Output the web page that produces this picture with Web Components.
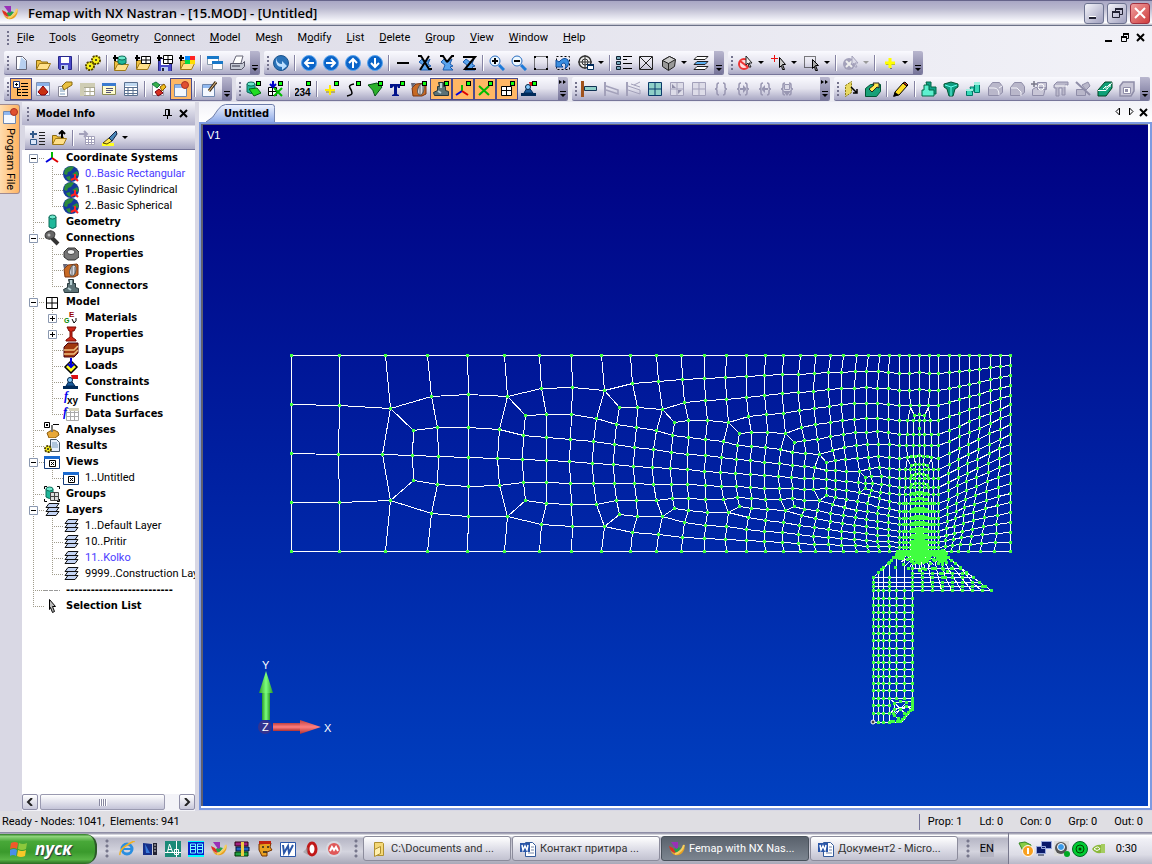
<!DOCTYPE html>
<html lang="en">
<head>
<meta charset="utf-8">
<title>Femap with NX Nastran - [15.MOD] - [Untitled]</title>
<style>
html,body{margin:0;height:100%}
body{font:11px/16px Roboto,"Liberation Sans",sans-serif;color:#000;background:#d9d8e4;overflow:hidden}
</style>
</head>
<body>
<femap-desktop></femap-desktop>
<script>
/* ---------- icon set, 16 x 16 ---------- */
const badge='<path fill="#000" d="M11 0h5v5h-5z"/><path fill="#1f1" d="M12 1h3v3h-3z"/>';
const G='#a3a1ba';
const folder='<path fill="#f0c040" stroke="#8a6a10" d="M1.5 14V5.500h4l1 1.500h6v2"/><path fill="#ffe08a" stroke="#a07a18" d="M1.500 14.500l3-6h11l-3 6z"/>';
const plus='<path stroke="#000" stroke-width="2" d="M2 0v6M0 3h5"/>';
const floppy='<path fill="#4a4ac8" stroke="#26268a" d="M1.500 1.500h13v13h-12l-1-1z"/><path fill="#fff" d="M4 2h8v6H4z"/><path fill="#b8c8f0" d="M4 10h7v5H4z"/><path fill="#223" d="M5 11h2v3H5z"/>';
const gear=(x,y,r)=>`<circle cx="${x}" cy="${y}" r="${r}" fill="#ee0" stroke="#554400" stroke-width="2" stroke-dasharray="2 1"/><circle cx="${x}" cy="${y}" r="${r-1}" fill="#f8f020"/><circle cx="${x}" cy="${y}" r="1" fill="#222"/>`;
const can=(x,y,w,h)=>`<path fill="#20b89a" stroke="#0c6a58" d="M${x} ${y}v${h}q${w/2} 3 ${w} 0v-${h}"/><ellipse cx="${x+w/2}" cy="${y}" rx="${w/2}" ry="2" fill="#6ee8cc" stroke="#0c6a58"/>`;
const ball=p=>`<circle cx="8" cy="8" r="7.500" fill="#0a64c8" stroke="#5aa4ee"/><path d="${p}" fill="none" stroke="#fff" stroke-width="2"/>`;
const star=x=>`<path fill="#5aa4ee" stroke="#1c5cae" d="M5 4l4 3 4-3-2 5 3 2-3 1 3 3H4l2-5-4-3z"/><path stroke="#000" stroke-width="2" fill="none" d="${x}"/>`;
const lens=s=>`<path stroke="#1d7ad8" stroke-width="3" d="M10 10l5 5"/><circle cx="6" cy="6" r="5" fill="#eef8ff" stroke="#2a6ec0"/><path stroke="#000" stroke-width="2" d="${s}"/>`;
const axes=(x,y)=>`<g stroke-width="2" transform="translate(${x} ${y})"><path stroke="#0b0" d="M7 7V1"/><path stroke="#00d" d="M7 7l-6 4"/><path stroke="#d00" d="M7 7l6 4"/></g>`;
const grid='<path fill="#fff" stroke="#000" d="M2.500 3.500h11v11h-11zM8 4v10M3 9h10"/>';
const gridSm='<path fill="#fff" stroke="#000" d="M2.500 5.500h10v9h-10zM7.500 5v10M2 9.500h11"/>';
const globe='<circle cx="8" cy="8" r="8" fill="#143a9c"/><path fill="#2c8a3c" d="M2 3q5-4 9-2l-3 4-3 1-1 3-3-1zM9 8l5-3 2 4-3 1zM3 11l4-1 1 5-3-1z"/><path fill="none" stroke="#f22" stroke-width="2" d="M12 8v4l3 3m-3-3l-4 2"/>';
const coupling='<path fill="#c86a24" stroke="#7a3510" d="M1 7l4-4 9-1 1 1v10l-4 2H2z"/><path fill="#667" d="M0 2h5L1 7z"/><ellipse cx="10" cy="8.500" rx="3" ry="5.500" fill="#d8d8e0" stroke="#555" transform="rotate(15 10 8)"/><path fill="none" stroke="#666" d="M9 4v9M12 5v7"/>';
const connector='<path fill="#5c7276" stroke="#26383c" d="M5.500 1.500h5v4h2v4l3 1v4H1.500l-1-3 4-2v-4h2z"/><path stroke="#b8d0d4" stroke-width="2" d="M8 2v5M5 10l3 2"/>';
const constraint='<path fill="#d11" d="M8 1h7v4H9z"/><path fill="#1a5a9a" stroke="#002a5a" d="M7 5l5 7H3z"/><path fill="#002a5a" d="M0 12h15v3H0z"/><circle cx="7" cy="6" r="2.500" fill="#8cf" stroke="#024"/>';
const layers=c=>`<path fill="${c}" stroke="#111" d="M5 1.500h10l-3 4H2zM5 5.500h10l-3 4H2zM5 9.500h10l-3 4H2z"/>`;
const femap='<path fill="#e8a020" d="M1 9q4 5 9 2 5-3 5-8 2 6-3 10-7 4-11-4z"/><path fill="#28a048" d="M3 9l5-3 4 1-4 5z"/><path fill="#9a30b8" d="M2 1l7 0 0 6-2 1z"/><path fill="#e03020" d="M0 5l4 2 3 5q-6-1-7-7z"/><path fill="none" stroke="#f6d060" stroke-width="2" d="M6 13q7-2 9-9"/>';
const word='<path fill="#fff" stroke="#335a9a" d="M5.500 1.500h7l3 3v11h-10z"/><path stroke="#78a" d="M11 6h3M11 9h3M8 12h6"/><path fill="#2a56a8" d="M0 2h10v9H0z"/><path fill="none" stroke="#fff" stroke-width="1.500" d="M2 4l1 5 2-4 2 4 1-5"/>';
const gbox=p=>`<path fill="#b9b7ca" stroke="#8f8da8" d="M1.500 6.500l4-5h7l3 4v6l-4 3h-10z"/><path fill="none" stroke="#f4f4fa" d="${p}"/>`;
const winIcon='<path fill="#fff" stroke="#123a7a" d="M.5 2.500h15v12H.5z"/><path fill="#1a6ad0" d="M0 2h16v3H0z"/><path fill="none" stroke="#000" d="M5.500 6.500h6v6h-6zM7 8l3 3m0-3l-3 3"/>';
const brace='<path fill="none" stroke="#9997b2" stroke-width="1.500" d="M6 2q-2 0-2 2v2q0 2-2 2 2 0 2 2v2q0 2 2 2M10 2q2 0 2 2v2q0 2 2 2-2 0-2 2v2q0 2-2 2"/>';
const ICON={
new:'<path fill="#fff" stroke="#667" d="M3.500 1.500h6l4 4v9h-10z"/><path fill="#b8d0f0" d="M8 2l5 4v8H6z"/>',
open:folder, save:floppy, gears:gear(11,5,4)+gear(5,11,4),
geoIn:'<g transform="translate(0 1)">'+folder+'</g>'+can(5,3,8,5)+plus,
feIn:folder+'<path fill="#fff" stroke="#000" d="M6.500 1.500h9v7h-9zM11 1v8M6 5h10"/>'+plus,
feOut:'<g transform="translate(0 2)">'+floppy+'</g><path fill="#fff" stroke="#000" d="M6.500.5h9v8h-9zM11 0v9M6 4.500h10"/>'+plus,
resIn:folder+'<path fill="#08f" d="M6 1h5v4H6z"/><path fill="#f22" d="M11 1h5v4h-5z"/><path fill="#0d4" d="M6 5h5v4H6z"/><path fill="#fd0" d="M11 5h5v4h-5z"/>'+plus,
cascade:'<path fill="#fff" stroke="#89a" d="M.5 1.500h11v8H.5z"/><path fill="#1878c8" d="M0 1h12v3H0z"/><path fill="#fff" stroke="#89a" d="M5.500 7.500h10v7h-10z"/><path fill="#1878c8" d="M5 6h11v3H5z"/>',
print:'<path fill="#fff" stroke="#667" d="M4 8l3-7h7l-2 7"/><path fill="#c4c8d4" stroke="#556" d="M1.500 8.500h12l2-2v5l-3 3h-11z"/><path stroke="#334" d="M3 11h8"/>',
sync:'<circle cx="8" cy="8" r="7.500" fill="#2a72b8" stroke="#1c548e"/><path fill="#bfe0ff" d="M3 3q1 6 6 6V6l5 5-5 4v-3Q2 12 3 3z"/>',
left:ball('M13 8H5M8 4L4 8l4 4'),right:ball('M3 8h8M8 4l4 4-4 4'),up:ball('M8 13V5M4 8l4-4 4 4'),down:ball('M8 3v8M4 8l4 4 4-4'),
minus:'<path stroke="#000" stroke-width="2" d="M2 8h12"/>',
vx:star('M1 1h3l8 13h3M12 1l-9 14'),vy:star('M1 1h3l4 6M15 1h-2l-5 6'),vz:star('M2 2h12L4 14h11'),
zin:lens('M6 3v6M3 6h6'),zout:lens('M3 6h6'),
marquee:'<path fill="none" stroke="#000" stroke-dasharray="1 1" d="M1.500 1.500h13v13h-13z"/><path fill="#000" d="M1 1h2v2H1zM13 1h2v2h-2zM1 13h2v2H1zM13 13h2v2h-2z"/>',
undo:'<path fill="none" stroke="#000" stroke-dasharray="2 2" d="M1.500 1.500h13v13h-13z"/><path fill="#3a8ee0" stroke="#0c4a9a" d="M1 5l3 2q5-6 9-2 2 5-3 9 2-5-1-6-2 0-3 2l2 2H1z"/>',
target:'<circle cx="7" cy="7" r="6" fill="#eee" stroke="#333" stroke-width="1.500"/><path stroke="#333" fill="none" d="M7 0v14M0 7h14M4 7a3 3 0 016 0 3 3 0 01-6 0"/><path fill="#fff" stroke="#002a5a" d="M9.500 9.500h6v5h-6z"/><path fill="#002a5a" d="M9 9h7v2H9z"/>',
list:'<path fill="#7ab" stroke="#123" d="M.5 1.500h4v3h-4zM.5 6.500h4v3h-4zM.5 11.500h4v3h-4z"/><path stroke="#000" d="M7 1.500h9M7 4.500h4M7 8.500h9M7 13.500h9"/>',
xbox:'<path fill="none" stroke="#222" d="M1.500 1.500h13v13h-13zM2 2l12 12M14 2L2 14"/>',
cube:'<path fill="#999" stroke="#222" d="M1.500 5.500l7-4 6 3-1 7-6 4-6-4z"/><path fill="#ccc" stroke="#222" d="M1.500 5.500l7-4 6 3-7 4z"/><path stroke="#222" d="M7.500 8v7"/>',
stack:'<path fill="#fff" stroke="#222" d="M4 1.500h11l-3 3H1zM4 11.500h11l-3 3H1z"/><path fill="#5aaef0" stroke="#222" d="M4 6.500h11l-3 3H1z"/>',
nopick:'<circle cx="6" cy="9" r="5" fill="#fdd" stroke="#e33" stroke-width="2"/><path stroke="#e33" stroke-width="2" d="M2 6l8 6"/><path fill="#eee" stroke="#222" d="M8 1l6 7-3 0 2 4-2 0-1-4-2 2z"/>',
pick:'<path stroke="#e11" d="M3.500 0v7M0 3.500h7"/><path fill="#ccc" stroke="#000" d="M8.500 2.500l6 7h-3l2 5-2 0-1-4-2 2z"/>',
boxpick:'<path fill="none" stroke="#000" stroke-dasharray="1 1" d="M.5 1.500h11v11H.5z"/><path fill="#aaa" stroke="#000" d="M8.500 4.500l6 6h-3l2 5-2 0-1-4-2 2z"/>',
nocirc:`<circle cx="6" cy="9" r="6" fill="${G}"/><path stroke="#eee" stroke-width="2" d="M3 6l6 6m0-6l-6 6"/><path fill="#dddce8" stroke="${G}" d="M9 1l6 7-3 0 2 4-2 0-1-4-2 2z"/>`,
yplus:'<path stroke="#777" d="M8 13.500h2M4 9.500h9"/><path stroke="#ff0" stroke-width="3" d="M8 3v10M3 8h10"/>',
infotree:'<path fill="#fff" stroke="#223a7a" d="M.5.5h6v6h-6z"/><path stroke="#000" d="M3.500 2v3M2 3.500h3"/><path fill="none" stroke="#000" d="M8 2.500h7M8 5.500h7M9 8.500h6M9 11.500h6M9 14.500h6M4.500 7v7.500H8M4.500 8.500H8M4.500 11.500H8"/>',
entity:'<path fill="#eaf0fa" stroke="#8090b0" d="M1.500 1.500h13v13h-13z"/><path fill="#8ab0e8" d="M2 2h12v3H2z"/><path fill="#c83010" stroke="#801" d="M8 5l5 6-3 3H6l-3-3z"/>',
handsheet:'<path fill="#fff" stroke="#889" d="M1.500 5.500h9v10h-9z"/><path stroke="#79b" d="M3 8h5M3 10h5M3 13h5"/><path fill="#e8c040" stroke="#8a6a10" d="M5 5l4-4h6v3l-5 3-3 2z"/>',
table:'<path fill="#fff" stroke="#aaa890" d="M1.500 2.500h14v12h-14zM6 2v13M11 2v13M1 6.500h14M1 10.500h14"/><path fill="#cfcdb4" d="M1 2h15v4H1zM1 2h4v13H1z"/>',
note:'<path fill="#fffcd0" stroke="#8a8a50" d="M1.500 3.500h13v10h-13z"/><path fill="#3a7ad0" d="M1 2h14v3H1z"/><path stroke="#557" d="M5 7.500h7M5 9.500h7M5 11.500h5"/>',
sheet:'<path fill="#fff" stroke="#5a7090" d="M1.500 1.500h13v13h-13zM5 6v9M10 6v9M1 6.500h13M1 9.500h13M1 12.500h13"/><path fill="#c0d8f0" d="M2 2h12v3H2z"/>',
debug:'<path fill="#fff" stroke="#99a" d="M1.500 3.500h11v11h-11z"/><path fill="#3ab04a" stroke="#174" d="M1 3l4-2 4 3-3 3z"/><path fill="#f0c020" stroke="#850" d="M9 6l4-3 2 3-4 4z"/><path fill="#d83020" stroke="#701" d="M4 11l4-3 4 4-5 3z"/>',
record:'<path fill="#f4f8ff" stroke="#7088b0" d="M1.500 3.500h12v12h-12z"/><path fill="#90b8f0" d="M2 4h11v3H2z"/><circle cx="12" cy="4" r="3.500" fill="#e05030" stroke="#a32"/>',
edit:'<path fill="#f4f8ff" stroke="#7088b0" d="M1.500 3.500h12v12h-12z"/><path fill="#90b8f0" d="M2 4h11v3H2z"/><path stroke="#432" stroke-width="3" d="M15 1l-7 9"/><path stroke="#e8c080" d="M15 1l-7 9"/>',
solidB:can(2,3,8,8)+'<path fill="#2d2" stroke="#061" d="M4 8l8-1 4 5-7 3z"/>'+badge,
meshB:'<path fill="#fff" stroke="#000" d="M1.500 6.500h8v8h-8zM5.500 6v9M1 10.500h8"/><path stroke="#00c" stroke-width="2" d="M6 0v5M3 3l3 3 3-3"/><path stroke="#0b0" stroke-width="2" d="M7 7l8 8m0-8l-8 8"/>'+badge,
n234:'<text x="-1" y="15" font-family="Liberation Sans" font-size="10" font-weight="700" fill="#000">234</text>'+badge,
ptB:'<path stroke="#980" d="M3 11h9"/><path stroke="#fe0" stroke-width="2" d="M7 4v10M2 9h10"/>'+badge,
curveB:'<path fill="none" stroke="#000" stroke-width="1.500" d="M9 3q-6 1-4 4t2 5-5 3"/>'+badge,
surfB:'<path fill="#2bb02b" stroke="#051" d="M1 4l9-2 5 4-7 9q-1-6-7-11z"/>'+badge,
textB:'<path fill="#00128a" d="M1 3h10v4H9l-1-2v8l2 1v1H3v-1l2-1V5L3 7H1z"/>'+badge,
coupB:coupling+badge,connB:connector+badge,axesB:axes(0,3)+badge,xB:'<path stroke="#0b0" stroke-width="2" d="M2 5l10 9M12 5L2 14"/>'+badge,gridB:gridSm+badge,
consB:constraint+badge,
beam:'<path fill="#a0521c" d="M0 0h3v16H0z"/><path fill="#8fd0c8" stroke="#135" d="M3.500 5.500h12v4h-12z"/>',
beamG:`<path fill="${G}" d="M1 1h2v14H1z"/><path fill="none" stroke="${G}" stroke-width="1.500" d="M3 5l12 4v4L3 9"/>`,
beamG2:`<path fill="${G}" d="M1 1h2v14H1z"/><path fill="none" stroke="${G}" d="M3 5l12 4v4L3 9M6 3l9 3M15 1l-6 3"/>`,
quad:'<path fill="#8fd0c8" stroke="#0a3a6a" d="M1.500 1.500h13v13h-13zM8 1v13M1 8h13"/>',
quadG:`<path fill="#dddce8" stroke="${G}" d="M1.500 1.500h13v13h-13zM8 1v13M1 8h13"/><path fill="#8f8da8" d="M3 3l4 4H3zM9 9h4l-4 4z"/>`,
quadG2:`<path fill="#dddce8" stroke="${G}" d="M1.500 1.500h13v13h-13zM8 1v13M1 8h13"/>`,
brace, braceR:brace+'<path fill="#9997b2" d="M5 7h3V4l4 4-4 4V9H5z"/>',braceL:brace+'<path fill="#9997b2" d="M11 7H8V4L4 8l4 4V9h3z"/>',braceD:brace+'<path fill="#dddce8" stroke="#9997b2" d="M5.500 3.500h5v5h-5z"/><path fill="#9997b2" d="M4 10h8l-4 5z"/>',
hatch:'<path fill="#e8d860" stroke="#8a7a10" stroke-dasharray="2 1" d="M2.500 4.500l6-4v11l-6 4z"/><path fill="none" stroke="#000" stroke-width="1.500" d="M8 6l6 6m0-4v4h-4"/>',
boxarrow:'<path fill="#18a078" stroke="#053" d="M.5 7.500l5-4h10v7l-4 5H.5z"/><path fill="#ffe850" stroke="#222" d="M4 8l5-4-1-2h6v5l-2-1-5 5z"/>',
pencil:'<path fill="#fd2" stroke="#000" d="M2 11l8-9 4 3-8 9-5 1z"/><path fill="#d42" stroke="#000" d="M10 2l2-1 3 3-1 1z"/><path fill="#000" d="M0 16l2-5 4 3z"/>',
extr:'<path fill="#10a088" stroke="#064" d="M5 1h5v5h5v7H8z"/><path fill="#5ef0d0" stroke="#064" d="M3 4h5v5h5v6H1V9h2z"/>',
rev:'<path fill="#0e9c80" stroke="#053" d="M1 3l7-2 7 2v3l-3 2-2 7H6L4 8 1 6z"/><path stroke="#6fe" fill="none" d="M2 4l6 2 6-2M8 6v9"/>',
boxes:'<path fill="#3ad8b8" stroke="#076" d="M1.500 9.500h6v5h-6zM9.500 2.500h5v9h-5zM5 6h4v4H6z"/><path fill="#9ff0e0" d="M1 8h7v2H1zM9 1h6v3H9z"/>',
g1:gbox('M2 7h5q5 0 5 7M12 7l3-2'),g2:gbox('M2 7h6l4 4v4'),g3:'<path stroke="#778" stroke-width="1.500" d="M3 0v6M0 3h6"/><path fill="#c8c6d6" stroke="#8f8da8" d="M6.500 1.500h9v7h-9zM1.500 8.500l3-2h10l-2 8h-11z"/><circle cx="10" cy="6" r="3" fill="none" stroke="#fff"/>',
g4:'<path fill="#b9b7ca" stroke="#8f8da8" d="M1 4l3-3h11v3h-3v10h-3V7H6v8H3V7H1z"/><path stroke="#fff" d="M2 5h12"/>',g5:'<path fill="#b9b7ca" stroke="#8f8da8" d="M1.500 8.500h9v6h-9zM7 4l6-3 2 4-4 4z"/><path stroke="#8f8da8" stroke-width="2" d="M1 1l14 13"/>',
sweep:'<path fill="#10a078" stroke="#042" d="M1 9l7-8h7v6l-6 8H1z"/><path fill="none" stroke="#fff" d="M6 8l3-3v3M10 6l3-3v3M1 9.500h8l6-8"/>',
shell:'<path fill="#c8c6d6" stroke="#8f8da8" stroke-width="1.500" d="M1 5l3-4h11v9l-3 5H1z"/><path fill="#fff" stroke="#8f8da8" d="M4.500 6.500h7v6h-7z"/><path fill="#8f8da8" d="M6 8h3v3H6z"/>',
csys:'<g transform="translate(1 1)">'+axes(0,0)+'</g>',globe,geo:can(5,3,7,10),
bolt:'<path stroke="#333" stroke-width="4" d="M8 8l6 6"/><ellipse cx="6" cy="5" rx="5" ry="4" fill="#666" stroke="#333" transform="rotate(-20 6 5)"/><circle cx="5" cy="5" r="1.500" fill="#bbb"/>',
nut:'<path fill="#777" stroke="#333" d="M1 6l4-4h7l4 4v5l-4 3H5l-4-3z"/><ellipse cx="8" cy="6" rx="4" ry="2.500" fill="#eee" stroke="#444"/>',
region:coupling,connector,model:grid,
mat:'<text x="1" y="13" font-family="Liberation Sans" font-size="7" font-weight="700" fill="#080">G</text><text x="6" y="7" font-family="Liberation Sans" font-size="8" font-weight="700" fill="#900">E</text><path fill="none" stroke="#000" d="M9 9l2 4q3-2 2-5"/>',
ibeam:'<path fill="#d02818" stroke="#7a0c04" d="M4 1h9l-2 4H9v6l4 3v1H3v-1l4-3V5H6z"/>',
layup:'<path fill="#a03810" stroke="#401" d="M1 5l4-4h10v10l-4 4H1z"/><path stroke="#f0c080" stroke-width="1.500" d="M1 8h10l4-4M1 12h10l4-4"/>',
load:'<path fill="#ff2" stroke="#000" stroke-width="1.500" d="M8 3l6 6-6 6-6-6z"/><path stroke="#00d" stroke-width="2" d="M8 0v8M5 6l3 3 3-3"/>',cons:constraint,
fxy:'<text x="1" y="10" font-family="Liberation Serif" font-size="12" font-style="italic" font-weight="700" fill="#00e">f</text><text x="4" y="14" font-family="Liberation Sans" font-size="10" font-weight="700" fill="#000">xy</text>',
ds:'<path fill="#fff" stroke="#aaa" d="M3.500 2.500h12v12h-12zM7.500 2v13M11.500 2v13M3 6.500h12M3 10.500h12"/><path fill="#d5d2bb" d="M6 2h10v3H6z"/><text x="0" y="10" font-family="Liberation Serif" font-size="12" font-style="italic" font-weight="700" fill="#00e">f</text>',
analyses:'<path fill="#fff" stroke="#000" d="M.5.5h5v5h-5zM2 2l2 2m0-2L2 4M9 2.500h6"/><path fill="#e8a838" stroke="#8a5a08" d="M3 11l3-2 4-1 4 2 1 3-4 3H5z"/><path stroke="#777" stroke-width="2" d="M8 3v7"/>',
results:'<path fill="#e8f0fc" stroke="#456" d="M6.500 1.500h6l3 3v9h-9z"/><path stroke="#79b" d="M8 5h5M8 7h6M8 9h6"/>'+gear(4,11,3),
views:winIcon,
groups:can(2,3,7,8)+'<path fill="#ddd" stroke="#444" d="M6.500 6.500h8v8h-8zM10.500 6v9M6 10.500h9"/><path fill="none" stroke="#000" d="M.5 3V.5H3M13 .5h2.500V3M.5 13v2.500H3M13 15.500h2.500V13"/>',
layers:layers('#c4d4f4'),
dash:'<path stroke="#999" stroke-dasharray="4 1" d="M0 8.500h16"/>',
cursor:'<path fill="#bbb" stroke="#000" d="M5.500 1.500l6 7h-3l2 5-2 1-2-5-1 2z"/>',
expand:'<path fill="#dce8fa" stroke="#335a8a" d="M1.500 9.500h6v5h-6z"/><path fill="none" stroke="#335a8a" stroke-width="2" d="M4 1v7M1 4h7"/><path stroke="#222" d="M10 2.500h6M10 5.500h6M10 8.500h6M10 11.500h6M10 14.500h6"/>',
folderup:folder+'<path stroke="#000" stroke-width="2" d="M11 8V2M8 4l3-3 3 3"/>',
gtable:`<path stroke="${G}" stroke-width="2" d="M0 4h8M5 1l3 3-3 3"/><path fill="#fff" stroke="${G}" d="M6.500 6.500h9v8h-9zM9.500 6v9M12.500 6v9M6 9.500h9M6 12.500h9"/>`,
brush:'<path fill="#ff2" d="M0 13h12v3H0z"/><path fill="#ffe850" stroke="#540" d="M1 13l6-5 3 3-5 3z"/><path fill="#4a86b8" stroke="#124" d="M7 8l7-7 1 3-5 7z"/>',
ie:'<circle cx="8" cy="8" r="5" fill="none" stroke="#2a8ee0" stroke-width="3"/><path stroke="#2a8ee0" stroke-width="2" d="M4 8h9"/><path fill="none" stroke="#f0b020" stroke-width="1.500" d="M1 14Q0 9 8 4t7-3"/>',
q2:'<path fill="#16308a" d="M1 2l9 1v11H1z"/><path fill="#3a78d8" d="M3 3l5 9H4z"/><path fill="#223" d="M11 2h4v12h-4z"/><path stroke="#ccc" d="M12 4h2M12 7h2M12 10h2"/>',
q3:'<path fill="#1a8a78" d="M0 0h16v16H0z"/><path fill="none" stroke="#fff" d="M2.500 11l2-8 3 8M3 8.500h4M0 11.500h16M9.500 8.500h4v5h-4zM11.500 0v16"/>',
q4:'<path fill="#02c" d="M0 1h16v14H0z"/><path fill="#0ff" d="M0 0h16v1H0zM0 14h16v2H0z"/><path fill="none" stroke="#7ff" d="M2.500 3v9h5V3zM9.500 3v9h5V3zM3 5.500h4M10 5.500h4M3 8.500h4M10 8.500h4"/>',
femap,
rar:'<path fill="#a02080" stroke="#301" d="M1 1h13v4H1z"/><path fill="#2060c0" stroke="#013" d="M2 6h13v4H2z"/><path fill="#20a040" stroke="#030" d="M1 11h13v4H1z"/><path fill="#ec4" d="M7 1h3v14H7z"/>',
q7:'<path fill="#e8a020" stroke="#730" d="M2 3l12-1-1 4 2 3-5 2v4H5L2 9z"/><path fill="#c02010" d="M2 0h12v3H2z"/><path stroke="#222" stroke-width="1.500" d="M5 6h2M10 6h2M6 11h4"/>',
q8:'<path fill="#fff" stroke="#2a56a8" d="M.5 1.500h15v14H.5z"/><path fill="none" stroke="#2a56a8" stroke-width="2" d="M3 4l1 8 4-7 1 7 4-8"/>',
opera:'<ellipse cx="9" cy="8" rx="4" ry="6" fill="#fff" stroke="#c01818" stroke-width="3"/><path fill="#888" opacity=".5" d="M0 11l5-5v8z"/>',
q10:'<circle cx="8" cy="8" r="8" fill="#d8d8e0"/><circle cx="8" cy="8" r="6" fill="#e05858"/><path fill="none" stroke="#fff" stroke-width="2" d="M4 10l2-4 2 3 2-3 2 4"/>',
folder:'<path fill="#f4d878" stroke="#b09030" d="M3.500 1.500h8l1 1v12h-9z"/><path fill="#fff0b0" stroke="#b09030" d="M3.500 8.500l6-3v7l-6 3z"/>',word,
t1:'<path fill="#8c4" stroke="#382" d="M1 2l6-1 6 3-2 7-5 1z"/><circle cx="10" cy="10" r="5.500" fill="#f8a020" stroke="#fff"/><path stroke="#fff" stroke-width="2" d="M10 7v6"/>',
t2:'<path fill="#0a1a6a" stroke="#9ad" d="M5.500.5h10v7h-10zM.5 5.500h9v7h-9z"/><path stroke="#124" d="M2 14h6"/>',
t3:'<path fill="#ddd" d="M0 0h15v15H0z"/><circle cx="7" cy="7" r="6" fill="#555"/><circle cx="7" cy="6" r="3.500" fill="#3a9ae8" stroke="#fff"/><circle cx="13" cy="13" r="3" fill="#0a2"/>',
t4:'<circle cx="8" cy="8" r="7.500" fill="#0c3" stroke="#062"/><circle cx="8" cy="8" r="4" fill="none" stroke="#040"/><circle cx="8" cy="8" r="1.500" fill="#040"/>',
t5:'<path fill="#8ab83a" d="M2 8q4-5 9-4v8q-6 1-9-4z"/><path fill="none" stroke="#fff" d="M4 8q4-4 6 0-3 3-6 0"/><path fill="#a4cc60" d="M11 3h4v9h-4z"/>'
};
const svg=n=>`<svg width="16" height="16" viewBox="0 0 16 16" fill="none" aria-hidden="true">${ICON[n]||''}</svg>`;
const BOLD='700 11px/16px "DejaVu Sans Condensed","DejaVu Sans",sans-serif';

function define(name,render){
  customElements.define(name,class extends HTMLElement{
    connectedCallback(){ if(!this.shadowRoot){ this.attachShadow({mode:'open'}).innerHTML=render(this); } }
  });
}
const RESET=':host,*{box-sizing:border-box}button{font:inherit;color:inherit;margin:0;padding:0;border:0;background:none}svg{display:block;flex:none}';

/* one toolbar button, optionally pressed or with a drop-down arrow */
define('tool-button',el=>`<style>${RESET}:host{display:block;flex:none}
button{display:flex;align-items:center;justify-content:center;gap:4px;width:22px;height:22px;border:1px solid transparent}
button.drop{width:33px}button.on{background:#ffb764;border-color:#4b4b8b}
i{border:3px solid transparent;border-top-color:#000;border-bottom:0}i.off{border-top-color:#999}</style>
<button type="button" aria-label="${el.getAttribute('icon')}" class="${el.hasAttribute('on')?'on':''} ${el.hasAttribute('drop')?'drop':''}">${svg(el.getAttribute('icon'))}${el.hasAttribute('drop')?`<i class="${el.hasAttribute('off')?'off':''}"></i>`:''}</button>`);

define('tool-sep',()=>`<style>:host{display:flex;flex:none;width:6px;justify-content:center}i{width:2px;height:16px;background:linear-gradient(90deg,#8583a3 50%,#fff 50%)}</style><i></i>`);

define('tool-grip',()=>`<style>:host{display:block;flex:none;width:3px;height:14px;background:repeating-linear-gradient(#73728c 0 2px,transparent 2px 4px) 0 0/2px 100% no-repeat}</style>`);

define('tool-bar',el=>`<style>${RESET}:host{display:flex;flex:none;align-items:center;height:24px;padding-left:3px;background:linear-gradient(#fafaff,#e4e3ee 50%,#a9a8c4);border-bottom:1px solid #77769a;border-radius:2px}
.more{width:10px;height:100%;margin-left:2px;background:linear-gradient(#b9b7cf,#77759a);border-radius:0 2px 2px 0;display:flex;flex-direction:column;align-items:center;justify-content:space-between;padding:3px 0;align-self:stretch}
.more b{display:block;width:6px;border-top:1px solid #000}.more i{display:block;border:3px solid transparent;border-top-color:#000;border-bottom:0;margin-top:2px}
.gap{width:${el.getAttribute('gap')||0}px}</style>
<tool-grip></tool-grip><slot></slot><span class="gap"></span><button class="more" type="button" aria-label="Toolbar options"><svg width="8" height="5">${el.hasAttribute('gap')?'<path d="M0 0l3 2-3 2zM4 0l3 2-3 2z"/>':''}</svg><span><b></b><i></i></span></button>`);

/* suffixes: * pressed, > drop-down, ! greyed arrow; a lone | is a separator */
const tools=s=>s.split(' ').map(t=>{ if(t==='|')return '<tool-sep></tool-sep>';
  const [,n,f]=t.match(/^(\w+)(.*)$/); return `<tool-button icon="${n}"${f.includes('*')?' on':''}${f.includes('>')?' drop':''}${f.includes('!')?' off':''}></tool-button>`; }).join('');

define('title-bar',()=>`<style>${RESET}:host{display:flex;align-items:center;height:26px;flex:none;padding:0 2px;border-top:1px solid #66648a;border-bottom:1px solid #6c7288;background:linear-gradient(#a9a7c4,#bab9cf 30%,#f2f2f8 80%,#fff 90%,#b9bac8)}
h1{flex:1;margin:0 0 0 10px;font:600 13px/20px "Open Sans","Noto Sans",sans-serif;white-space:nowrap}
button{width:20px;height:21px;margin-left:3px;border:1px solid #6d7390;border-radius:3px;background:linear-gradient(135deg,#f4f4fa,#9f9fbd);display:grid;place-items:center}
button.x{background:linear-gradient(135deg,#f0a0a0,#cf3c3c);border-color:#a03040}</style>
${svg('femap')}<h1>Femap with NX Nastran - [15.MOD] - [Untitled]</h1>
<button aria-label="Minimize"><svg width="14" height="14"><path stroke="#223" stroke-width="2" d="M2 12h7"/><path stroke="#fff" d="M2 10.500h7"/></svg></button>
<button aria-label="Restore"><svg width="14" height="14" fill="none" stroke="#223"><path d="M5.500 5V2.500h7v6H10M2.500 6.500h7v5h-7z"/><path stroke-width="2" d="M5 3h8M2 6h8"/></svg></button>
<button class="x" aria-label="Close"><svg width="14" height="14"><path stroke="#fff" stroke-width="2" d="M2 2l10 10M12 2L2 12"/></svg></button>`);

define('menu-bar',()=>`<style>${RESET}:host{display:flex;align-items:center;height:24px;flex:none;padding:0 3px 0 7px;background:linear-gradient(90deg,#dad9e5,#f2f2f8)}
nav{display:flex;flex:1;margin-left:7px;gap:15px}a{color:#000;text-decoration:none}button{width:16px;height:16px;display:grid;place-items:center}</style>
<tool-grip></tool-grip><nav>${['_File','_Tools','G_eometry','_Connect','_Model','Me_sh','M_odify','_List','_Delete','_Group','_View','_Window','_Help'].map(t=>`<a href="#">${t.replace(/_(.)/,'<u>$1</u>')}</a>`).join('')}</nav>
<button aria-label="Minimize view"><svg width="10" height="10"><path stroke="#000" stroke-width="2" d="M1 8h7"/></svg></button>
<button aria-label="Restore view"><svg width="10" height="10" fill="none" stroke="#000"><path d="M3.500 3V1.500h5v4H7M1.500 4.500h5v4h-5z"/><path stroke-width="2" d="M3 1h6M1 4h6"/></svg></button>
<button aria-label="Close view"><svg width="10" height="10"><path stroke="#000" stroke-width="2" d="M1 1l7 7M8 1L1 8"/></svg></button>`);

define('tool-area',()=>`<style>:host{display:flex;flex-direction:column;gap:2px;padding:1px 0 1px 4px;flex:none;overflow:hidden;background:linear-gradient(90deg,#dad9e5,#f2f2f8)}div{display:flex;gap:4px}</style>
<div><tool-bar>${tools('new open save | gears | geoIn feIn feOut resIn | cascade print')}</tool-bar>
<tool-bar>${tools('sync | left right up down | minus vx vy vz | zin zout marquee undo target> | list xbox cube> stack')}</tool-bar>
<tool-bar>${tools('nopick> pick> boxpick> | nocirc>! | yplus>')}</tool-bar></div>
<div><tool-bar>${tools('infotree* entity handsheet table note sheet | debug record* | edit')}</tool-bar>
<tool-bar gap="16">${tools('solidB meshB | n234 | ptB curveB surfB textB coupB connB* axesB* xB* gridB* consB')}</tool-bar>
<tool-bar gap="20">${tools('beam beamG beamG2 quad quadG quadG2 brace braceR braceL braceD')}</tool-bar>
<tool-bar>${tools('hatch boxarrow | pencil | extr rev boxes g1 g2 g3 g4 g5 sweep shell')}</tool-bar></div>`);

/* ---------- model tree: level, icon, text, box (- or +), style (b bold, a active) ---------- */
const TREE=[
[1,'csys','Coordinate Systems','-','b'],[2,'globe','0..Basic Rectangular','','a'],[2,'globe','1..Basic Cylindrical'],[2,'globe','2..Basic Spherical'],
[1,'geo','Geometry','','b'],[1,'bolt','Connections','-','b'],[2,'nut','Properties','','b'],[2,'region','Regions','','b'],[2,'connector','Connectors','','b'],
[1,'model','Model','-','b'],[2,'mat','Materials','+','b'],[2,'ibeam','Properties','+','b'],[2,'layup','Layups','','b'],[2,'load','Loads','','b'],[2,'cons','Constraints','','b'],[2,'fxy','Functions','','b'],[2,'ds','Data Surfaces','','b'],
[1,'analyses','Analyses','','b'],[1,'results','Results','','b'],[1,'views','Views','-','b'],[2,'views','1..Untitled'],[1,'groups','Groups','','b'],
[1,'layers','Layers','-','b'],[2,'layers','1..Default Layer'],[2,'layers','10..Pritir'],[2,'layers','11..Kolko','','a'],[2,'layers','9999..Construction Layer'],
[1,'dash','--------------------------','','b'],[1,'cursor','Selection List','','b']];
const gutter=(w,x,top,bottom,arm,box)=>`<svg width="${w}" height="16" fill="none" stroke="#a09c8c" stroke-dasharray="1 1"><path d="${top?`M${x}.500 0v8`:''}${bottom?`M${x}.500 8v8`:''}${arm?`M${x} 8.500h${w-x}`:''}"/>${box?`<g stroke-dasharray="none"><path fill="#fff" stroke="#8a98b0" d="M${x-4}.500 4.500h8v8h-8z"/><path stroke="#000" d="M${x-2} 8.500h5${box==='+'?`M${x}.500 6v5`:''}"/></g>`:''}</svg>`;
define('model-tree',()=>`<style>${RESET}:host{display:block;background:#fff;overflow:hidden;flex:1;min-height:0}
ul{margin:0;padding:0;list-style:none}li{display:flex;height:16px;white-space:nowrap}
span{margin-left:6px}.b{font:${BOLD}}.a{color:#4a3cff}</style><ul role="tree">${TREE.map((r,i)=>{
  const [lv,ic,tx,box,st='']=r, last=i===TREE.length-1, next=TREE[i+1];
  return `<li role="treeitem">${gutter(22,11,i>0,!last,lv===1,lv===1&&box)}${lv===2?gutter(19,8,true,next&&next[0]===2,true,box):''}${svg(ic)}<span class="${st}">${tx}</span></li>`;}).join('')}</ul>`);

define('scroll-strip',()=>`<style>${RESET}:host{display:flex;height:17px;flex:none;gap:2px;background:#f3f3f8}
button{width:16px;height:16px;border:1px solid #8f8fa8;border-radius:2px;background:linear-gradient(#fff,#c8c8da);display:grid;place-items:center}
.thumb{flex:1;margin-right:12px;border:1px solid #9a9ab0;border-radius:2px;background:linear-gradient(#fff,#c4c4d8);height:16px;display:grid;place-items:center}
.thumb i{width:8px;height:7px;background:repeating-linear-gradient(90deg,#8888a0 0 1px,#fff 1px 2px)}</style>
<button aria-label="Scroll left"><svg width="8" height="8" fill="none" stroke="#222" stroke-width="2"><path d="M6 0L2 4l4 4"/></svg></button><div class="thumb"><i></i></div><button aria-label="Scroll right"><svg width="8" height="8" fill="none" stroke="#222" stroke-width="2"><path d="M2 0l4 4-4 4"/></svg></button>`);

define('model-info',()=>`<style>${RESET}:host{display:flex;flex-direction:column;width:173px;flex:none;min-height:0}
header{display:flex;align-items:center;height:23px;padding:0 4px 0 5px;background:linear-gradient(#f2f2f8,#b4b3cc)}
h2{flex:1;margin:0 0 0 6px;font:${BOLD}}header button{width:16px;height:16px;display:grid;place-items:center}
.tools{display:flex;align-items:center;height:24px;margin:1px 0 0 3px;padding-left:1px;background:linear-gradient(#fafaff,#dddce8 50%,#a9a8c4);border-bottom:1px solid #77769a}</style>
<header><tool-grip></tool-grip><h2>Model Info</h2><button aria-label="Pin"><svg width="9" height="10" fill="none" stroke="#000"><path d="M2.500 6V.5h4V6M0 6.500h9M4.500 7v3M5.500 1v5"/></svg></button><button aria-label="Close"><svg width="9" height="9"><path stroke="#000" stroke-width="2" d="M1 1l7 7M8 1L1 8"/></svg></button></header>
<div class="tools"><tool-button icon="expand"></tool-button><tool-button icon="folderup"></tool-button><tool-sep></tool-sep><tool-button icon="gtable"></tool-button><tool-button icon="brush" drop></tool-button></div>
<model-tree></model-tree><scroll-strip></scroll-strip>`);

define('side-tab',()=>`<style>${RESET}:host{display:block;width:22px;flex:none;padding-top:2px;background:#d9d8e4}
button{display:flex;flex-direction:column;align-items:center;gap:4px;width:20px;height:90px;padding-top:3px;background:linear-gradient(90deg,#ffdcae,#ffb462);border:1px solid #a08a90;border-left:0;border-radius:0 3px 3px 0}
span{writing-mode:vertical-rl;white-space:nowrap;line-height:14px}</style><button type="button">${svg('record')}<span>Program File</span></button>`);

/* ---------- finite element mesh ---------- */
/* Node columns are stored in thirds of a pixel: "x,y x,y ..." from the top edge down. */
const col=(dx,s)=>s.split(' ').map(p=>{const [x,y]=p.split(',').map(Number);return [x+dx,y];});
/* a transition column splits at node a: inner is the finer chain spliced between a and its mirror */
function buildPlate(){
  const lines=[],nodes=[];
  const poly=p=>{lines.push(p);};
  const link=(A,B)=>A.forEach((p,i)=>B[i]&&lines.push([p,B[i]]));
  const R=1080;
  const seq=[
  [col(0,'34,46 34,193 34,340 34,487 34,634')],
  [col(0,'178,46 178,196 175,343 178,487 178,634')],
  [col(0,'316,46 331,205 307,343 331,481 316,634'),1,col(0,'400,271 397,346 400,421')],
  [col(0,'442,46 454,169 472,262 475,349 472,433 454,520 442,634')],
  [col(0,'562,46 565,163 565,262 565,352 565,439 565,529 562,634')],
  [col(0,'673,46 682,169 658,268 652,355 658,436 682,528 673,634'),1,col(0,'736,226 730,286 727,358 730,427 736,481')],
  [col(0,'778,46 784,145 799,223 799,292 799,361 799,427 799,490 784,553 778,634')],
  [col(0,'874,46 877,142 874,223 871,298 868,364 871,430 874,493 877,559 874,634')],
  [col(0,'964,46 973,151 949,235 940,304 937,370 940,430 949,493 973,559 964,634'),1,col(0,'1018,202 1009,253 1003,313 1000,373 1003,430 1009,481 1018,523')],
  [col(0,'1051,46 1057,130 1072,202 1069,262 1063,322 1060,379 1063,430 1069,481 1072,529 1057,577 1051,634')],
  [col(R,'49,46 55,124 67,208 49,271 40,328 37,382 40,433 49,481 67,529 55,583 49,634'),2,col(R,'103,247 97,286 94,337 91,385 94,433 97,475 103,505')],
  [col(R,'124,46 127,118 133,187 145,241 145,292 142,343 142,388 142,433 145,475 145,511 133,547 127,590 124,634')],
  [col(R,'193,46 193,115 196,181 202,241 196,298 196,346 193,394 196,436 196,478 202,517 196,556 193,595 193,634')],
  [col(R,'259,46 256,112 259,178 265,247 250,304 244,352 241,397 244,439 250,478 265,517 259,559 256,598 259,634'),3,col(R,'298,280 292,316 289,358 286,400 289,439 292,472 298,499')],
  [col(R,'319,46 319,109 319,172 325,229 334,277 334,319 331,361 331,403 331,442 334,475 334,505 325,532 319,568 319,601 319,634')],
  [col(R,'376,46 373,106 373,166 379,223 382,277 376,322 373,367 373,406 373,445 376,478 382,508 376,541 373,574 373,604 376,634')],
  [col(R,'430,46 427,103 427,160 430,220 436,280 421,328 418,370 415,409 418,445 421,478 436,511 430,547 427,577 427,607 430,634'),4,col(R,'463,307 457,337 457,376 454,412 457,445 457,475 463,499')],
  [col(R,'481,46 475,103 475,157 478,211 484,262 493,301 496,340 493,379 493,415 493,448 493,481 493,508 484,526 478,556 475,583 475,610 481,634')],
  [col(R,'526,46 523,100 520,154 523,205 526,253 532,298 538,343 523,382 520,415 520,448 538,481 532,511 526,535 523,562 520,589 523,613 526,634'),6,col(R,'559,367 559,391 559,418 559,445 559,466')],
  [col(R,'571,46 565,97 565,148 568,199 571,247 571,289 577,331 586,361 586,391 586,421 586,448 586,472 577,493 571,520 571,544 565,568 565,592 565,613 571,634')],
  [col(R,'610,46 604,97 604,145 604,193 607,241 610,283 613,322 616,358 619,394 619,424 619,451 619,478 613,502 610,526 607,550 604,574 604,595 604,616 610,634')],
  [col(R,'649,46 646,94 643,145 643,190 643,238 646,277 649,316 652,355 658,394 655,427 658,457 652,484 649,511 646,532 643,556 643,577 643,598 646,616 649,634'),8,col(R,'676,412 676,430 676,445')],
  [col(R,'685,46 679,94 679,142 679,190 679,235 679,277 682,313 685,352 688,385 694,409 697,430 694,451 688,466 682,490 682,514 679,538 679,559 679,580 679,601 682,619 685,634')],
  [col(R,'718,46 715,94 712,145 712,190 712,235 712,274 715,313 715,349 718,382 724,409 724,433 721,457 718,475 715,500 712,520 712,544 712,565 712,586 712,604 715,619 718,634')],
  [col(R,'748,46 745,97 745,145 745,193 745,238 745,277 748,313 748,352 748,385 748,412 748,436 748,460 748,484 748,505 745,526 745,547 745,568 745,586 745,604 748,619 748,634')]];
  let prev=null;
  for(const [c,a,inner] of seq){
    poly(c); nodes.push(...c); if(prev) link(prev,c); prev=c;
    if(inner){ const n=c.length; poly([c[a],...inner,c[n-1-a]]); nodes.push(...inner);
      for(let k=a+1;k<=n-2-a;k++) lines.push([c[k],inner[k-a]]);
      prev=[...c.slice(0,a+1),...inner,...c.slice(n-1-a)]; }
  }
  /* refined band above the contact */
  const ly=[46,100,151,196,241,283,316,355,388,415,442,463,490,514,535,553,574,592,605,620,634];
  const L=ly.map(y=>[R+778,y]), E=ly.map(y=>[R+895,y]);
  poly(L);poly(E);nodes.push(...L,...E);link(prev,L);
  const few=[[808,838,868],[808,838,868],[808,838,868],[811,838,865],[802,820,838,853,871],[802,820,838,853,874],[799,820,838,853,874],[802,814,826,838,850,862,874]];
  const mid=[796,811,823,838,853,865,880], low=[790,799,811,820,829,838,847,856,865,874,883];
  ly.forEach((y,i)=>{ const xs=i<8?few[i]:i<12?mid:low;
    const bend=i&&i<3?-3:(i===7?-10:0);
    const row=[L[i],...xs.map(x=>[R+x,y+Math.round(bend*(1-Math.abs(x-838)/60))]),E[i]]; poly(row);nodes.push(...row); });
  poly(col(R,'808,46 808,148 811,202 802,244 799,316 802,355 796,391 790,634'));
  poly(col(R,'868,46 868,148 865,202 871,244 874,316 874,355 880,391 883,634'));
  poly(col(R,'811,202 823,226 853,226 865,202'));nodes.push(...col(R,'823,226 838,223 853,226 838,265'));
  poly(col(R,'823,226 820,250 820,346 826,370 826,634'));poly(col(R,'853,226 853,346 850,370 850,634'));poly(col(R,'838,46 838,634'));
  poly(col(R,'802,355 811,376 811,634'));poly(col(R,'874,355 865,376 865,634'));
  for(const x of [799,874]) poly([[R+x,470],[R+x,634]]);
  for(const y of [372,400,428,457,475,503,527,545,565,583,600,612,626]){
    const xs=y<440?[814,826,838,850,862]:[817,826,832,838,844,850,859];
    const row=xs.map(x=>[R+x,y+Math.round(Math.pow((x-838)/27,2)*5)]);
    poly(row); nodes.push(...row); }
  /* right-hand fan of rows falling toward the contact */
  const tx=[895,928,958,988,1018,1051,1081,1111], bx=[895,913,934,955,985,1021,1063,1111];
  const fan=tx.map((x,j)=>ly.map((y,i)=>{ const t=i/20, ry=46+29.4*i, s=(x-895)/216;
    return [R+Math.round(x+(bx[j]-x)*Math.pow(t,2.2)),Math.round(y+(ry-y)*s)]; }));
  fan.forEach((c,j)=>{poly(c);nodes.push(...c); if(j) link(fan[j-1],c);});
  return {lines,nodes};
}
/* shaft and wedge under the plate, same thirds of a pixel */
function buildShaft(){
  const lines=[],nodes=[]; const O=([x,y])=>[x+1680,y+480];
  const P=s=>col(0,s).map(O);
  const xs=[100,115,130,148,169,193,217], ys=[232,247,259,271,295,316,337,358,379,400,421,445,466,487,508,529,550,571,595];
  for(const y of ys){ const r=xs.map(x=>O([x,y])); lines.push(r);nodes.push(...r.filter((_,i)=>y>265||i%3===0)); }
  for(const y of [616,640,665]){ const r=xs.slice(0,4).map(x=>O([x,y])); lines.push(r);nodes.push(...r); }
  const top=[232,217,202,187,172,163,157];
  xs.forEach((x,i)=>{ lines.push([O([x,top[i]]),O([x,i<4?665:595])]); nodes.push(O([x,top[i]])); });
  lines.push(P('100,232 115,217 130,202 144,190 160,172 178,155'));nodes.push(...P('115,217 124,208 130,202 144,190 153,181 160,172 169,163 178,157'));
  const edge=P('322,172 334,181 346,190 361,202 379,217 400,232 418,247 436,259 454,271');
  lines.push(O([298,155])?[O([298,155]),...edge]:edge);nodes.push(...edge);
  for(const [y,e] of [[205,361],[218,379],[232,400],[247,418],[259,436],[271,454]]){
    const r=[]; for(let x=217;x<e-8;x+=30) r.push(O([x,y])); r.push(O([e,y])); lines.push(r);nodes.push(...r); }
  for(const s of ['247,271 244,205 240,160','277,271 268,220 258,160','304,271 292,220 280,160','334,271 316,232 300,180','364,271 340,232 316,190','394,271 364,232 334,196','424,271 400,250 361,202']) lines.push(P(s));
  lines.push(P('217,595 217,627 208,637 184,665 148,665'),P('148,595 169,612 181,628 199,643'),P('217,604 181,604 163,610 163,646 181,664'),P('217,616 181,628 160,640'),P('199,607 163,646'),P('148,640 163,628 199,619 217,627'),P('163,610 199,643'));
  nodes.push(...P('163,610 181,604 199,607 217,604 163,628 181,628 199,619 217,612 217,620 217,627 211,631 205,637 199,643 193,652 187,658 181,664 172,664 160,664 154,664 160,640 163,646 175,655 193,640'));
  /* dense contact nodes in arcs around the hot spots */
  for(const [cx,cy,max,n] of [[238,154,40,10],[303,172,24,9],[181,168,14,6]])
    for(let r=0;r<max;r+=7) for(let k=0;k<=n;k++){ const a=Math.PI*k/n*(cx===238?1:2); nodes.push(O([Math.round(cx+r*Math.cos(a)),Math.round(cy+r*Math.sin(a))])); }
  nodes.push(...P('166,202 190,193 205,205 220,190 238,211 256,208 271,190 286,205 300,220 310,208 322,214 334,205 316,232 200,178 214,184 262,181 280,178'));
  for(let x=170;x<310;x+=9) nodes.push(O([x,154]),O([x,162]));
  for(let a=0;a<=12;a++){ const c=Math.cos(Math.PI*a/12),s=Math.sin(Math.PI*a/12); lines.push([O([238,155]),O([Math.round(238+62*c),Math.round(157+52*s)])]); }
  return {lines,nodes};
}
define('mesh-view',()=>{
  const a=buildPlate(),b=buildShaft();
  /* data origin lies 77,215 inside the viewport */
  const X=v=>Math.round(v/3)+77, Y=v=>Math.round(v/3)+215;
  let d='',q='';
  for(const l of [...a.lines,...b.lines]) d+='M'+l.map(([x,y])=>`${X(x)}.500 ${Y(y)}.500`).join('L');
  const seen=new Set();
  for(const [x,y] of [...a.nodes,...b.nodes]){ const k=X(x)+','+Y(y); if(seen.has(k))continue; seen.add(k); q+=`M${X(x)-1} ${Y(y)-1}h3v3h-3z`; }
  return `<style>:host{display:block;flex:1;min-height:0;overflow:hidden;background:linear-gradient(#000082,#0040c0)}
svg{display:block;width:100%;height:100%}text{font:11px "Liberation Sans",sans-serif;fill:#fff}</style>
<svg role="img" aria-label="Finite element mesh"><defs><linearGradient id="gr"><stop stop-color="#2a9a2a"/><stop offset=".5" stop-color="#7dff7d"/><stop offset="1" stop-color="#2a9a2a"/></linearGradient>
<linearGradient id="rd" x2="0" y2="1"><stop stop-color="#c04040"/><stop offset=".5" stop-color="#ff8080"/><stop offset="1" stop-color="#b03030"/></linearGradient></defs>
<g shape-rendering="crispEdges"><path d="${d}" fill="none" stroke="#fff"/><path d="${q}" fill="#40ff40"/></g>
<circle cx="670" cy="597" r="2" fill="#444" stroke="#fff"/>
<path fill="url(#gr)" d="M59 567h8v28h-8z"/><path fill="url(#gr)" d="M63 546l7 22H56z"/>
<path fill="url(#rd)" d="M70 598h27v8H70z"/><path fill="url(#rd)" d="M97 595l21 7-21 7z"/>
<circle cx="62" cy="602" r="7" fill="#333390"/>
<text x="4" y="14">V1</text><text x="59" y="544">Y</text><text x="121" y="607">X</text><text x="59" y="606">Z</text></svg>`;
});

define('view-pane',()=>`<style>${RESET}:host{display:flex;flex-direction:column;flex:1;min-width:0;margin:0 0 1px 4px}
.tabs{display:flex;align-items:flex-end;flex:none;height:20px;padding:0 2px 0 7px;background:linear-gradient(#f2f2f8,#fff)}
.tab{position:relative;z-index:0;height:18px;padding:0 6px 0 18px;font:${BOLD};line-height:20px}
.tab svg{position:absolute;inset:0;z-index:-1}
.nav{margin-left:auto;display:flex;align-self:center}.nav button{width:13px;height:14px;display:grid;place-items:center}
.frame{flex:1;min-height:0;display:flex;border:2px solid #7e9be0;background:#fff;padding:0 2px 2px 0}
.inner{flex:1;display:flex;min-width:0;border:solid #606070;border-width:1px 0 0 2px}</style>
<div class="tabs"><button class="tab" type="button"><svg width="100%" height="18" viewBox="0 0 71 18" preserveAspectRatio="none"><defs><linearGradient id="t" x2="0" y2="1"><stop stop-color="#f0f4ff"/><stop offset="1" stop-color="#8fabe8"/></linearGradient></defs><path fill="url(#t)" stroke="#6a7aa8" d="M0 18Q8 14 12 6 16 .5 20 .5h48q2.500 0 2.500 3V18"/></svg>Untitled</button>
<div class="nav"><button aria-label="Previous tab"><svg width="8" height="10" fill="none" stroke="#000"><path d="M5.500 1v7L2 4.500z"/></svg></button><button aria-label="Next tab"><svg width="8" height="10" fill="none" stroke="#000"><path d="M2.500 1v7L6 4.500z"/></svg></button><button aria-label="Close tab"><svg width="9" height="9"><path stroke="#000" stroke-width="2" d="M1 1l7 7M8 1L1 8"/></svg></button></div></div>
<div class="frame"><div class="inner"><mesh-view></mesh-view></div></div>`);

define('status-bar',()=>`<style>:host{display:flex;align-items:center;gap:17px;height:22px;flex:none;padding:1px 9px 0 2px;background:#dfdee3;border-bottom:1px solid #8e8da6;box-sizing:border-box;white-space:nowrap;font-size:11px}
.msg{flex:1;white-space:pre}.first{border-left:1px solid #77769a;padding-left:8px}</style>
<span class="msg">Ready - Nodes: 1041,  Elements: 941</span><span class="first">Prop: 1</span><span>Ld: 0</span><span>Con: 0</span><span>Grp: 0</span><span>Out: 0</span>`);

define('task-button',el=>`<style>${RESET}:host{display:block;flex:1 1 0;min-width:0;max-width:148px}
button{display:flex;align-items:center;gap:4px;width:100%;height:25px;padding:0 7px;border:1px solid #8c8c9c;border-radius:3px;background:linear-gradient(#fff,#d9d9e4 60%,#c2c2d0);color:#333;white-space:nowrap}
button.on{background:linear-gradient(#59616c,#7c8590);color:#fff;border-color:#4a525c}</style>
<button type="button" class="${el.hasAttribute('on')?'on':''}">${svg(el.getAttribute('icon'))}<span><slot></slot></span></button>`);

define('task-bar',()=>`<style>${RESET}:host{display:flex;align-items:center;height:31px;flex:none;background:linear-gradient(#8f8fa4,#fff 8%,#b7b7c6 18%,#d4d4de 60%,#a8a8b8)}
.start{display:flex;align-items:center;gap:7px;width:97px;height:30px;padding-left:10px;background:linear-gradient(#2a7a22,#8fd47c 8%,#48a838 25%,#3a9a2c 60%,#57b445 85%,#2a6a22);border-radius:0 12px 12px 0;border-right:2px solid #2c5a28;color:#fff;font:italic 700 17px/20px "Open Sans","Noto Sans",sans-serif;text-shadow:1px 1px 1px #234}
.grip{width:5px;height:20px;flex:none;background:radial-gradient(circle at 2px 2px,#77778c 1px,transparent 2px) 0 0/5px 5px}
.quick{display:flex;gap:7px;margin:0 12px 0 9px}.quick button{width:16px;height:16px}.start+.grip{margin-left:8px}
.tasks{display:flex;flex:1;gap:1px;margin:0 6px 0 4px;min-width:0}
.lang{width:14px;height:17px;margin:0 14px 0 9px;background:#b4b4c2;display:grid;place-items:center}
.tray{display:flex;align-items:center;gap:2px;height:31px;padding:0 15px 0 9px;border-left:1px solid #77778c;background:linear-gradient(#8f8fa4,#fff 8%,#f0f0f6 20%,#dcdce6 70%,#b8b8c8)}
time{margin-left:8px}</style>
<button class="start" type="button"><svg width="18" height="18"><path fill="#f0582a" d="M1 3q4-2 7 0L7 9Q4 7 0 9z"/><path fill="#8cc83c" d="M9 3q4 2 8 0l-1 6q-4 2-8 0z"/><path fill="#4a8ee8" d="M0 10q4-2 7 0l-1 6q-3-2-6 0z"/><path fill="#f8c828" d="M8 10q4 2 8 0l-1 6q-4 2-8 0z"/></svg>пуск</button>
<span class="grip"></span>
<div class="quick">${['ie','q2','q3','q4','femap','rar','q7','q8','opera','q10'].map(n=>`<button type="button" aria-label="${n}">${svg(n)}</button>`).join('')}</div>
<span class="grip"></span>
<div class="tasks"><task-button icon="folder">C:\\Documents and ...</task-button><task-button icon="word">Контакт притира ...</task-button><task-button icon="femap" on>Femap with NX Nas...</task-button><task-button icon="word">Документ2 - Micro...</task-button></div>
<span class="grip"></span><span class="lang">EN</span>
<div class="tray">${['t1','t2','t3','t4','t5'].map(svg).join('')}<time>0:30</time></div>`);

define('femap-desktop',()=>`<style>:host{display:flex;flex-direction:column;height:100vh;overflow:hidden}
main{display:flex;flex:1;min-height:0;background:#d9d8e4}</style>
<title-bar></title-bar><menu-bar></menu-bar><tool-area></tool-area>
<main><side-tab></side-tab><model-info></model-info><view-pane></view-pane></main>
<status-bar></status-bar><task-bar></task-bar>`);
</script>
</body>
</html>
